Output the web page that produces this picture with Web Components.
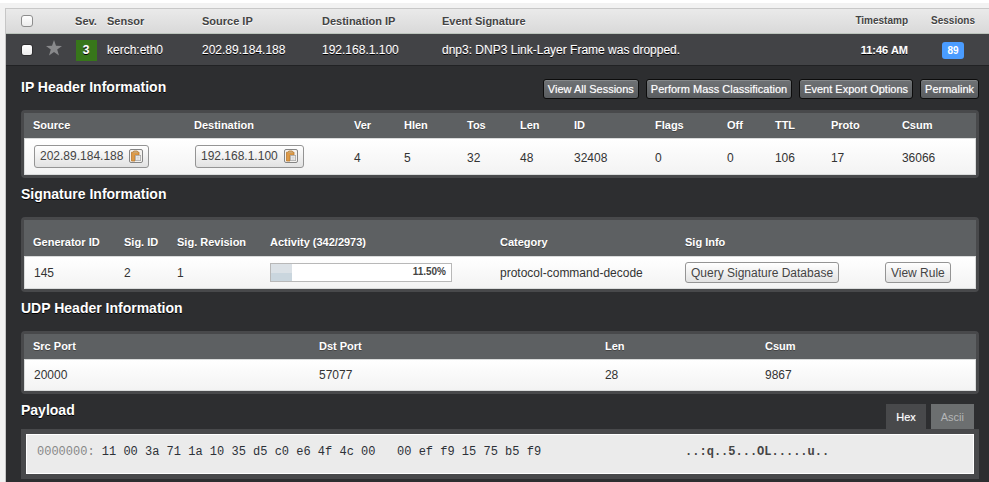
<!DOCTYPE html>
<html lang="en">
<head>
<meta charset="utf-8">
<title>Event details</title>
<style>
  body {
    margin: 0;
    min-height: 100vh;
    box-sizing: border-box;
    padding: 5px 0 0 5px;
    border-top: 3px solid #fff;
    background: #f2f2f2;
    display: flex;
    flex-direction: column;
    font: 12px/16px "Liberation Sans", Arial, sans-serif;
    color: #333;
  }
</style>
</head>
<body>
<event-view></event-view>
<script>
const clipboardIcon = `
<svg viewBox="0 0 14 14" width="14" height="14" aria-hidden="true">
  <rect x=".5" y=".5" width="13" height="13" rx="1.500" fill="#f3f1ee" stroke="#858585"/>
  <path d="M2.500 3.200h1.800l.5-1.200h3.400l.5 1.200h1.300v3h-4v5.800h-3.500z" fill="#dd9a48" stroke="#b97a30" stroke-width=".8"/>
  <path d="M4.200 3.800h4.600l-.8-1.400h-3z" fill="#c3ab83"/>
  <rect x="6.400" y="6.400" width="5.200" height="5.200" fill="#f0f0f0" stroke="#a8a8a8" stroke-width=".8"/>
  <path d="M7.500 8.200h3M7.500 10h3" stroke="#c4c4c4" stroke-width=".8"/>
</svg>`;

class ShadowElement extends HTMLElement {
  connectedCallback() {
    if (this.shadowRoot) return;
    this.attachShadow({ mode: 'open' }).innerHTML = this.render();
  }
}

customElements.define('event-view', class extends ShadowElement {
  render() {
    return `
    <style>
      :host { display: flex; flex-direction: column; flex: 1; border-left: 1px solid #c6c6c6; background: #2d2e30; }
      main { padding: 5px 10px 3px 15px; }
      .tools { display: flex; gap: 7px; }
    </style>
    <event-list></event-list>
    <main>
      <detail-section heading="IP Header Information">
        <div class="tools" slot="tools">
          <tool-button>View All Sessions</tool-button>
          <tool-button>Perform Mass Classification</tool-button>
          <tool-button>Event Export Options</tool-button>
          <tool-button>Permalink</tool-button>
        </div>
        <ip-table></ip-table>
      </detail-section>
      <detail-section heading="Signature Information"><signature-table></signature-table></detail-section>
      <detail-section heading="UDP Header Information"><udp-table></udp-table></detail-section>
      <payload-view></payload-view>
    </main>`;
  }
});

customElements.define('event-list', class extends ShadowElement {
  render() {
    return `
    <style>
      :host { display: block; }
      table { width: 100%; table-layout: fixed; border-collapse: separate; border-spacing: 0; }
      th, td { padding: 0 5px; text-align: left; white-space: nowrap; box-sizing: border-box; }
      th { height: 26px; font-size: 11px; color: #444; border: solid; border-width: 1px 0; border-color: #c8c8c8 transparent #bcc4bc;
           background: linear-gradient(#eaeaea, #d9d9d9); text-shadow: 0 1px 0 #fff; }
      th.small { font-size: 10px; }
      td { height: 32px; color: #fff; background: #424346; border-bottom: 1px solid #212224; text-shadow: 0 1px 0 #000, 0 0 1px #fff8; }
      .pick { padding-left: 15px; }
      .star { padding: 0 4px 3px; }
      .level { padding-top: 1px; }
      .mid { text-align: center; }
      .end { text-align: right; padding-right: 9px; }
      input { appearance: none; display: block; width: 12px; height: 12px; margin: 0; border: 1px solid #8d8d8d; border-radius: 3px;
              background: linear-gradient(#fff, #ececec); }
      td input { border-color: #2e2e30; }
      button { all: unset; display: block; cursor: pointer; }
      svg { display: block; }
      .sev { display: block; width: 21px; line-height: 21px; margin: auto; background: #37761a; font-weight: bold; text-align: center; }
      .time { font-size: 11px; font-weight: bold; }
      .count { display: inline-block; padding: 0 5px; line-height: 17px; border-radius: 3px; background: #4a9cff; font-size: 10px; font-weight: bold; text-shadow: none; }
    </style>
    <table>
      <colgroup><col style="width:36px"><col style="width:28px"><col style="width:32px"><col style="width:95px"><col style="width:120px"><col style="width:120px"><col><col style="width:80px"><col style="width:72px"></colgroup>
      <thead><tr>
        <th class="pick"><input type="checkbox" aria-label="Select all events"></th><th></th><th class="mid">Sev.</th>
        <th>Sensor</th><th>Source IP</th><th>Destination IP</th><th>Event Signature</th>
        <th class="end small">Timestamp</th><th class="mid small">Sessions</th>
      </tr></thead>
      <tbody><tr>
        <td class="pick"><input type="checkbox" aria-label="Select event"></td>
        <td class="star"><button type="button" aria-label="Star event"><svg viewBox="0 0 16 16" width="16" height="16"><path d="M8 0l2 5.700 6 .2-4.800 3.600 1.800 6L8 12l-5 3.500 1.800-6L0 5.900l6-.2z" fill="#88898b"/></svg></button></td>
        <td class="mid level"><span class="sev">3</span></td>
        <td>kerch:eth0</td><td>202.89.184.188</td><td>192.168.1.100</td>
        <td>dnp3: DNP3 Link-Layer Frame was dropped.</td>
        <td class="end time">11:46 AM</td><td class="mid level"><span class="count">89</span></td>
      </tr></tbody>
    </table>`;
  }
});

customElements.define('detail-section', class extends ShadowElement {
  render() {
    return `
    <style>
      :host { display: block; }
      header { display: flex; justify-content: space-between; align-items: center; height: 20px; padding: 6px 0 13px; }
      h2 { margin: 0; font-size: 14px; line-height: 20px; color: #fff; text-shadow: 0 1px 0 #000; }
      slot[name=tools] { display: block; }
      ::slotted([slot=tools]) { padding-top: 4px; }
    </style>
    <header><h2>${this.getAttribute('heading')}</h2><slot name="tools"></slot></header>
    <slot></slot>`;
  }
});

customElements.define('tool-button', class extends ShadowElement {
  render() {
    return `
    <style>
      :host { display: block; }
      button { display: block; height: 20px; margin: 0; padding: 0 4px 1px; border: 1px solid #0c0c0c; border-radius: 3px;
               background: linear-gradient(#6f7275, #5a5d60); box-shadow: inset 0 1px 0 #85888a; color: #fff;
               font: 11px/16px "Liberation Sans", Arial, sans-serif; white-space: nowrap; text-shadow: 0 0 1px #fff8; }
    </style>
    <button type="button"><slot></slot></button>`;
  }
});

customElements.define('light-button', class extends ShadowElement {
  render() {
    return `
    <style>
      :host { display: inline-block; vertical-align: middle; }
      button { display: flex; align-items: center; gap: 6px; height: var(--button-height, 21px); margin: 0; padding: 0 5px; border: 1px solid #949494; border-radius: 3px;
               background: linear-gradient(#fff, #e2e2e2); color: #444; font: 12px/16px "Liberation Sans", Arial, sans-serif; white-space: nowrap; }
    </style>
    <button type="button"><slot></slot></button>`;
  }
});

customElements.define('copy-address', class extends ShadowElement {
  render() {
    return `
    <style>:host { --button-height: 23px; display: block; } svg { display: block; }</style>
    <light-button><slot></slot>${clipboardIcon}</light-button>`;
  }
});

customElements.define('activity-bar', class extends ShadowElement {
  render() {
    const share = this.getAttribute('value');
    return `
    <style>
      :host { display: flex; box-sizing: border-box; max-width: 182px; height: 19px; border: 1px solid #b8b8b8; background: #fff; }
      .fill { width: ${share}%; background: linear-gradient(#dbe1e6 50%, #cad6de 50%); }
      b { margin-left: auto; padding-right: 5px; font-size: 10px; line-height: 16px; color: #444; }
    </style>
    <span class="fill"></span><b>${share}%</b>`;
  }
});

/* One-record table: each column is [label, relative width, cell markup]. */
class RecordTable extends ShadowElement {
  headHeight = 25;
  headPadding = '0 0 1px 9px';
  rowHeight = 37;
  rowPadding = '0 0 0 9px';
  render() {
    const cols = this.columns;
    const total = cols.reduce((sum, c) => sum + c[1], 0);
    return `
    <style>
      :host { display: block; border: 3px solid #48494b; border-radius: 4px; }
      table { width: 100%; table-layout: fixed; border-collapse: separate; border-spacing: 0; }
      th, td { box-sizing: border-box; text-align: left; white-space: nowrap; }
      th { height: ${this.headHeight}px; padding: ${this.headPadding}; font-size: 11px; color: #fff; background: #5d6062; text-shadow: 0 1px 0 #444; }
      td { height: ${this.rowHeight}px; padding: ${this.rowPadding}; background: linear-gradient(#fff, #f3f3f3); border: solid #d9dbdb; border-width: 1px 0; }
      td:first-child { border-left-width: 1px; }
      td:last-child { border-right-width: 1px; }
      copy-address { margin-bottom: 3px; }
      td + td copy-address { margin-left: 1px; }
    </style>
    <table>
      <colgroup>${cols.map(c => `<col style="width:${(c[1] / total * 100).toFixed(2)}%">`).join('')}</colgroup>
      <thead><tr>${cols.map(c => `<th>${c[0]}</th>`).join('')}</tr></thead>
      <tbody><tr>${cols.map(c => `<td>${c[2]}</td>`).join('')}</tr></tbody>
    </table>`;
  }
}

customElements.define('ip-table', class extends RecordTable {
  rowPadding = '2px 0 0 9px';
  columns = [
    ['Source', 161, '<copy-address>202.89.184.188</copy-address>'],
    ['Destination', 160, '<copy-address>192.168.1.100</copy-address>'],
    ['Ver', 50, '4'], ['Hlen', 63, '5'], ['Tos', 53, '32'], ['Len', 54, '48'], ['ID', 81, '32408'],
    ['Flags', 72, '0'], ['Off', 48, '0'], ['TTL', 56, '106'], ['Proto', 71, '17'], ['Csum', 83, '36066']
  ];
});

customElements.define('signature-table', class extends RecordTable {
  headHeight = 36;
  headPadding = '8px 0 0 9px';
  rowHeight = 33;
  columns = [
    ['Generator ID', 91, '145'], ['Sig. ID', 53, '2'], ['Sig. Revision', 93, '1'],
    ['Activity (342/2973)', 230, '<activity-bar value="11.50"></activity-bar>'],
    ['Category', 185, 'protocol-command-decode'],
    ['Sig Info', 200, '<light-button>Query Signature Database</light-button>'],
    ['', 100, '<light-button>View Rule</light-button>']
  ];
});

customElements.define('udp-table', class extends RecordTable {
  rowHeight = 32;
  columns = [['Src Port', 286, '20000'], ['Dst Port', 286, '57077'], ['Len', 160, '28'], ['Csum', 220, '9867']];
});

customElements.define('payload-view', class extends ShadowElement {
  render() {
    return `
    <style>
      :host { display: block; }
      header { display: flex; justify-content: space-between; align-items: flex-end; height: 35px; }
      h2 { margin: 0; padding-bottom: 9px; font-size: 14px; line-height: 20px; color: #fff; text-shadow: 0 1px 0 #000; }
      nav { display: flex; gap: 5px; padding-right: 5px; }
      button { height: 25px; margin: 0; padding: 0 10px; border: 0; background: #6c6f70; color: #b4b6b7; font: 11px/16px "Liberation Sans", Arial, sans-serif; }
      button[aria-selected=true] { background: #48494b; color: #fff; text-shadow: 0 0 1px #fff8; }
      pre { margin: 0; padding: 9px 10px 13px; border: 1px solid #fff; background: #ebebeb; color: #2d3138;
            font: 12px/16px "Liberation Mono", "Courier New", monospace; overflow: hidden; }
      .box { padding: 5px; background: #48494b; }
      .offset { color: #888; }
      b { color: #444; }
    </style>
    <header><h2>Payload</h2>
      <nav role="tablist"><button type="button" role="tab" aria-selected="true">Hex</button><button type="button" role="tab" aria-selected="false">Ascii</button></nav>
    </header>
    <div class="box"><pre><span class="offset">0000000:</span> 11 00 3a 71 1a 10 35 d5 c0 e6 4f 4c 00   00 ef f9 15 75 b5 f9${' '.repeat(20)}<b>..:q..5...OL.....u..</b></pre></div>`;
  }
});
</script>
</body>
</html>
